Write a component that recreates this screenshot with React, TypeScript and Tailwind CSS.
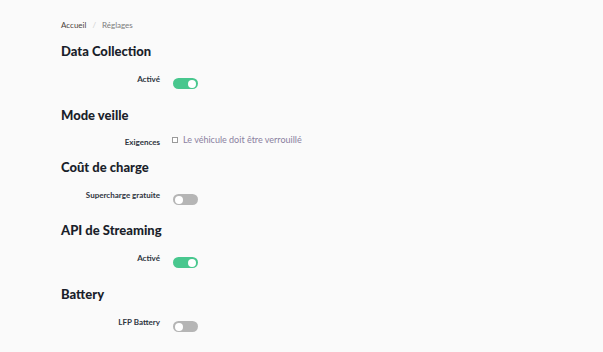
import React from "react";

function Toggle({ on }: { on: boolean }) {
  return (
    <div
      className={
        "relative w-[25px] h-[11px] rounded-full " +
        (on ? "bg-[#48c78e]" : "bg-[#b5b5b5]")
      }
    >
      <div
        className={
          "absolute top-[1.5px] w-[8px] h-[8px] rounded-full bg-white " +
          (on ? "right-[2px]" : "left-[2px]")
        }
      />
    </div>
  );
}

function Row({ label, children }: { label: string; children: React.ReactNode }) {
  return (
    <div className="flex items-start">
      <div className="w-[99px] text-right text-[8px] leading-[11px] font-bold text-[#2e3440]">{label}</div>
      <div className="ml-[13px] mt-[4px]">{children}</div>
    </div>
  );
}

function Heading({ children, className = "" }: { children: React.ReactNode; className?: string }) {
  return (
    <h2 className={"text-[13px] leading-[16px] font-black text-[#1a1f2b] " + className}>{children}</h2>
  );
}

export default function App() {
  return (
    <div
      className="w-[603px] h-[352px] bg-[#fafafa] pl-[61px] pt-[20px]"
      style={{ fontFamily: "Lato, 'Open Sans', sans-serif" }}
    >
      <div className="flex items-center text-[8px] leading-[11px]">
        <span className="text-[#4a3f3a]">Accueil</span>
        <span className="mx-[6px] text-[#cfcfcf]">/</span>
        <span className="text-[#7a7a7a]">Réglages</span>
      </div>

      <Heading className="mt-[12px]">Data Collection</Heading>
      <div className="mt-[15px]">
        <Row label="Activé">
          <Toggle on />
        </Row>
      </div>

      <Heading className="mt-[18px]">Mode veille</Heading>
      <div className="mt-[11px] flex items-start">
        <div className="w-[99px] pt-[3px] text-right text-[8px] leading-[11px] font-bold text-[#2e3440]">Exigences</div>
        <div className="ml-[12px] flex items-center text-[9px] leading-[11px] text-[#8a80a0]">
          <span className="w-[6px] h-[6px] border border-[#9a9a9a] bg-white mr-[5px]" />
          <span>Le véhicule doit être verrouillé</span>
        </div>
      </div>

      <Heading className="mt-[11px]">Coût de charge</Heading>
      <div className="mt-[15px]">
        <Row label="Supercharge gratuite">
          <Toggle on={false} />
        </Row>
      </div>

      <Heading className="mt-[17px]">API de Streaming</Heading>
      <div className="mt-[15px]">
        <Row label="Activé">
          <Toggle on />
        </Row>
      </div>

      <Heading className="mt-[18px]">Battery</Heading>
      <div className="mt-[15px]">
        <Row label="LFP Battery">
          <Toggle on={false} />
        </Row>
      </div>
    </div>
  );
}
